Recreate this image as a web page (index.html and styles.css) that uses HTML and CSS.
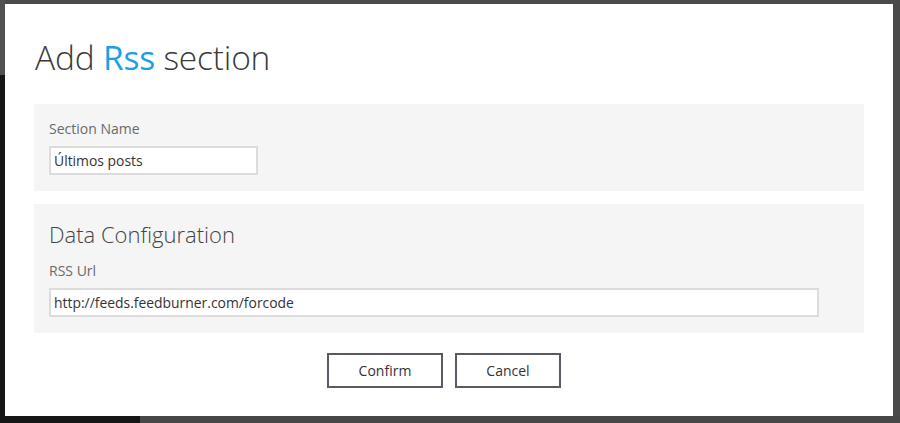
FILE: index.html
```html
<!DOCTYPE html>
<html lang="en">
<head>
<meta charset="utf-8">
<title>Add Rss section</title>
<link rel="stylesheet" href="styles.css">
</head>
<body>
<div class="backdrop">
  <div class="dialog">
    <h1 class="title">Add <span class="accent">Rss</span> section</h1>
    <section class="panel panel-name">
      <label class="label">Section Name</label>
      <div class="input input-short">Últimos posts</div>
    </section>
    <section class="panel panel-data">
      <h2 class="panel-title">Data Configuration</h2>
      <label class="label">RSS Url</label>
      <div class="input input-long">http://feeds.feedburner.com/forcode</div>
    </section>
    <div class="actions">
      <button class="btn btn-confirm">Confirm</button>
      <button class="btn btn-cancel">Cancel</button>
    </div>
  </div>
</div>
</body>
</html>
```
FILE: styles.css
```css
* { box-sizing: border-box; }
html, body {
  margin: 0;
  padding: 0;
  width: 900px;
  height: 423px;
  overflow: hidden;
}
body {
  background: #474747;
  font-family: "Open Sans", "Noto Sans", sans-serif;
  color: #333;
}
.backdrop {
  width: 900px;
  height: 423px;
  padding: 4px 7px 7px 5px;
  background:
    linear-gradient(to bottom, #505050 0, #505050 75px, #161616 75px) left top / 5px 100% no-repeat,
    linear-gradient(to right, #161616 0, #161616 140px, #474747 140px) left bottom / 100% 7px no-repeat,
    #4a4a4a;
}
.dialog {
  width: 888px;
  height: 412px;
  background: #fff;
  padding: 0 29px;
  display: flex;
  flex-direction: column;
}
.title {
  margin: 0;
  height: 100px;
  padding-top: 30px;
  padding-left: 1px;
  font-size: 33.5px;
  line-height: 46px;
  font-weight: 300;
  color: #3a3a3a;
  letter-spacing: -0.2px;
}
.accent { color: #1ba1e2; font-weight: 400; }
.panel {
  background: #f5f5f5;
  padding: 15px 15px 0;
}
.panel-name { height: 87px; }
.panel-data { height: 129px; margin-top: 13px; }
.label {
  display: block;
  font-size: 14px;
  line-height: 19px;
  color: #6a6a6a;
  margin-bottom: 8px;
}
.panel-title {
  margin: 0 0 12px;
  font-size: 22px;
  line-height: 30px;
  font-weight: 300;
  color: #444;
}
.input {
  height: 29px;
  background: #fff;
  border: 2px solid #dcdcdc;
  padding: 0 3px;
  font-size: 13.9px;
  line-height: 25px;
  color: #333;
  white-space: nowrap;
}
.input-short { width: 209px; }
.input-long { width: 770px; }
.actions {
  display: flex;
  justify-content: center;
  gap: 12px;
  margin-top: 20px;
  padding-right: 10px;
}
.btn {
  height: 35px;
  background: #fff;
  border: 2px solid #5a5a64;
  font-family: "Open Sans", "Noto Sans", sans-serif;
  font-size: 14px;
  color: #333;
  padding: 0;
}
.btn-confirm { width: 116px; }
.btn-cancel { width: 106px; }
```
